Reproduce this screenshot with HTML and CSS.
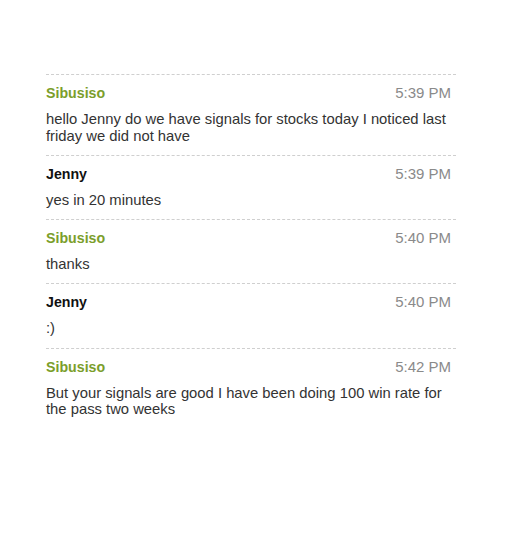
FILE: index.html
```html
<!DOCTYPE html>
<html>
<head>
<meta charset="utf-8">
<link rel="stylesheet" href="styles.css">
</head>
<body>
<div class="chat">
  <div class="msg">
    <div class="head"><span class="name green">Sibusiso</span><span class="time">5:39 PM</span></div>
    <div class="text">hello Jenny do we have signals for stocks today I noticed last friday we did not have</div>
  </div>
  <div class="msg">
    <div class="head"><span class="name">Jenny</span><span class="time">5:39 PM</span></div>
    <div class="text">yes in 20 minutes</div>
  </div>
  <div class="msg">
    <div class="head"><span class="name green">Sibusiso</span><span class="time">5:40 PM</span></div>
    <div class="text">thanks</div>
  </div>
  <div class="msg">
    <div class="head"><span class="name">Jenny</span><span class="time">5:40 PM</span></div>
    <div class="text">:)</div>
  </div>
  <div class="msg">
    <div class="head"><span class="name green">Sibusiso</span><span class="time">5:42 PM</span></div>
    <div class="text">But your signals are good I have been doing 100 win rate for the pass two weeks</div>
  </div>
</div>
</body>
</html>
```

FILE: styles.css
```css
html, body {
  margin: 0;
  padding: 0;
  background: #fff;
}
body {
  font-family: "Liberation Sans", Arial, sans-serif;
  font-size: 14px;
  color: #333;
}
.chat {
  margin: 74px 0 0 46px;
  width: 410px;
}
.msg {
  border-top: 1px dashed #cfcfcf;
  padding: 8px 0 10.4px 0;
}
.head {
  display: flex;
  justify-content: space-between;
  align-items: center;
  height: 20px;
  padding-right: 5px;
}
.name {
  font-weight: bold;
  font-size: 14.2px;
  line-height: 20px;
  color: #111;
}
.name.green {
  color: #7b9e2b;
}
.time {
  font-size: 15px;
  line-height: 20px;
  color: #8a8a8a;
}
.text {
  margin-top: 8px;
  font-size: 14.8px;
  line-height: 16.8px;
  color: #333;
}
```
